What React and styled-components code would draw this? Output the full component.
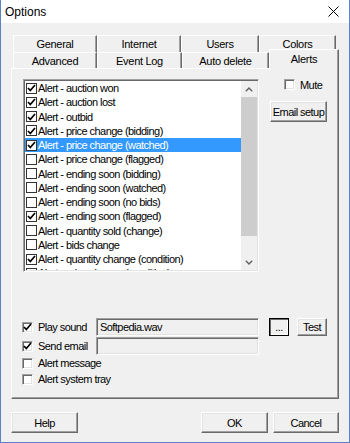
import React from 'react'
import styled, { createGlobalStyle } from 'styled-components'

const Global = createGlobalStyle`
  body {
    margin: 0;
    background: #fff;
  }
`

const Win = styled.div`
  width: 350px;
  height: 443px;
  box-sizing: border-box;
  border: 1px solid #5b82c6;
  border-top: none;
  background: #f0f0f0;
  display: flex;
  flex-direction: column;
  font-family: "Liberation Sans", Arial, sans-serif;
  font-size: 11px;
  letter-spacing: -0.55px;
  color: #000;
`

const TitleBar = styled.div`
  height: 23px;
  background: #fff;
  display: flex;
  align-items: center;
  justify-content: space-between;
  padding: 0 10px 0 4px;
  font-size: 12px;
  letter-spacing: 0;
`

const Body = styled.div`
  display: flex;
  flex-direction: column;
  padding: 12px 10px 0 10px;
`

const TabRow = styled.div`
  display: flex;
  align-items: flex-start;
  margin-left: 2px;
  height: ${p => p.$h}px;
`

const Tab = styled.div`
  width: ${p => p.$w}px;
  height: ${p => (p.$active ? 20 : p.$h)}px;
  margin-top: ${p => (p.$active ? -3 : 0)}px;
  box-sizing: border-box;
  background: #f0f0f0;
  border-top: 1px solid #fff;
  border-left: 1px solid #fff;
  border-right: 1px solid #696969;
  box-shadow: inset -1px 0 #a0a0a0;
  display: flex;
  align-items: ${p => (p.$active ? 'flex-start' : 'center')};
  padding-top: ${p => (p.$active ? 3 : 0)}px;
  justify-content: center;
  letter-spacing: -0.3px;
  z-index: ${p => (p.$active ? 2 : 0)};
`

const Panel = styled.div`
  height: 331px;
  box-sizing: border-box;
  border: 1px solid;
  border-color: #fff #696969 #696969 #fff;
  box-shadow: inset -1px -1px #a0a0a0;
  padding: 10px 11px 0 11px;
  display: flex;
  flex-direction: column;
`

const Top = styled.div`
  display: flex;
`

const ListBox = styled.div`
  width: 236px;
  height: 193px;
  box-sizing: border-box;
  border: 1px solid;
  border-color: #a0a0a0 #fff #fff #a0a0a0;
  box-shadow: inset 1px 1px #696969, inset -1px -1px #e3e3e3;
  padding: 1px;
  background: #fff;
  display: flex;
`

const Rows = styled.div`
  flex: 1;
  overflow: hidden;
`

const Row = styled.div`
  height: 14.25px;
  display: flex;
  align-items: center;
  white-space: nowrap;
  background: ${p => (p.$sel ? '#3399ff' : 'transparent')};
  color: ${p => (p.$sel ? '#fff' : '#000')};
  padding-left: 1px;
`

const FlatBox = styled.span`
  width: 11px;
  height: 11px;
  box-sizing: border-box;
  border: 1px solid #333;
  background: #fff;
  display: inline-flex;
  align-items: center;
  justify-content: center;
  margin-right: 1px;
  flex: none;
`

const Scroll = styled.div`
  width: 16px;
  display: flex;
  flex-direction: column;
  background: #f0f0f0;
`

const Arrow = styled.div`
  height: 16px;
  display: flex;
  align-items: center;
  justify-content: center;
`

const Track = styled.div`
  flex: 1;
  display: flex;
  flex-direction: column;
`

const Thumb = styled.div`
  height: 139px;
  background: #cdcdcd;
`

const Side = styled.div`
  margin-left: 11px;
  display: flex;
  flex-direction: column;
`

const MuteRow = styled.label`
  display: flex;
  align-items: center;
  height: 11px;
  padding-left: 14px;
  gap: 5px;
`

const Btn = styled.div`
  width: ${p => p.$w}px;
  height: ${p => p.$h || 21}px;
  box-sizing: border-box;
  border: 1px solid;
  border-color: ${p => (p.$dark ? '#000' : '#fff #696969 #696969 #fff')};
  box-shadow: ${p => (p.$dark ? 'inset 1px 1px #696969, inset -1px -1px #fff' : 'inset -1px -1px #a0a0a0, inset 1px 1px #e3e3e3')};
  background: #f0f0f0;
  display: flex;
  align-items: center;
  justify-content: center;
  white-space: nowrap;
  margin-top: ${p => p.$mt || 0}px;
  margin-left: ${p => p.$ml || 0}px;
  flex: none;
`

const Options = styled.div`
  margin-top: 46px;
  margin-left: -1px;
  display: flex;
  flex-direction: column;
`

const OptRow = styled.div`
  display: flex;
  align-items: center;
  height: ${p => p.$h}px;
  margin-bottom: ${p => p.$mb || 0}px;
`

const SunkBox = styled.span`
  width: 11px;
  height: 11px;
  box-sizing: border-box;
  border: 1px solid;
  border-color: #a0a0a0 #fff #fff #a0a0a0;
  box-shadow: inset 1px 1px #696969, inset -1px -1px #e3e3e3;
  background: #fff;
  display: inline-flex;
  align-items: center;
  justify-content: center;
  margin-right: 5px;
  flex: none;
`

const Label = styled.span`
  width: ${p => p.$w || 'auto'};
  flex: none;
`

const Field = styled.div`
  width: 163px;
  height: 18px;
  box-sizing: border-box;
  border: 1px solid;
  border-color: #a0a0a0 #fff #fff #a0a0a0;
  box-shadow: inset 1px 1px #696969, inset -1px -1px #e3e3e3;
  background: #f0f0f0;
  padding-left: 3px;
  display: flex;
  align-items: center;
`

const Footer = styled.div`
  display: flex;
  padding-top: 13px;
  gap: 5px;
`

const Spacer = styled.div`
  flex: 1;
`

const Check = () => (
  <svg width="9" height="8" viewBox="0 0 9 8">
    <polyline points="1,4 3.3,6.5 8,1" fill="none" stroke="#000" strokeWidth="1.7" />
  </svg>
)

const items = [
  ['Alert - auction won', true],
  ['Alert - auction lost', true],
  ['Alert - outbid', true],
  ['Alert - price change (bidding)', true],
  ['Alert - price change (watched)', true, true],
  ['Alert - price change (flagged)', false],
  ['Alert - ending soon (bidding)', false],
  ['Alert - ending soon (watched)', false],
  ['Alert - ending soon (no bids)', false],
  ['Alert - ending soon (flagged)', true],
  ['Alert - quantity sold (change)', false],
  ['Alert - bids change', false],
  ['Alert - quantity change (condition)', true],
  ['Alert - price change (condition)', false],
]

export default function App() {
  return (
    <Win>
      <Global />
      <TitleBar>
        <span>Options</span>
        <svg width="11" height="11" viewBox="0 0 11 11">
          <path d="M0.5 0.5 L10.5 10.5 M10.5 0.5 L0.5 10.5" stroke="#000" strokeWidth="1" />
        </svg>
      </TitleBar>
      <Body>
        <TabRow $h={17}>
          <Tab $w={84} $h={17}>General</Tab>
          <Tab $w={84} $h={17}>Internet</Tab>
          <Tab $w={78} $h={17}>Users</Tab>
          <Tab $w={77} $h={17}>Colors</Tab>
        </TabRow>
        <TabRow $h={16}>
          <Tab $w={84} $h={16}>Advanced</Tab>
          <Tab $w={85} $h={16}>Event Log</Tab>
          <Tab $w={87} $h={16}>Auto delete</Tab>
          <Tab $w={70} $h={16} $active>Alerts</Tab>
        </TabRow>
        <Panel>
          <Top>
            <ListBox>
              <Rows>
                {items.map(([t, c, s]) => (
                  <Row key={t} $sel={s}>
                    <FlatBox>{c && <Check />}</FlatBox>
                    {t}
                  </Row>
                ))}
              </Rows>
              <Scroll>
                <Arrow>
                  <svg width="8" height="5" viewBox="0 0 8 5">
                    <polyline points="0.8,4.2 4,1 7.2,4.2" fill="none" stroke="#606060" strokeWidth="1.4" />
                  </svg>
                </Arrow>
                <Track>
                  <Thumb />
                </Track>
                <Arrow>
                  <svg width="8" height="5" viewBox="0 0 8 5">
                    <polyline points="0.8,0.8 4,4 7.2,0.8" fill="none" stroke="#606060" strokeWidth="1.4" />
                  </svg>
                </Arrow>
              </Scroll>
            </ListBox>
            <Side>
              <MuteRow>
                <SunkBox style={{ marginRight: 0 }} />
                Mute
              </MuteRow>
              <Btn $w={57} $h={21} $mt={11}>Email setup</Btn>
            </Side>
          </Top>
          <Options>
            <OptRow $h={18} $mb={1}>
              <SunkBox><Check /></SunkBox>
              <Label $w="58px">Play sound</Label>
              <Field>Softpedia.wav</Field>
              <Btn $w={20} $h={18} $ml={10} $dark>...</Btn>
              <Btn $w={30} $h={18} $ml={8}>Test</Btn>
            </OptRow>
            <OptRow $h={18}>
              <SunkBox><Check /></SunkBox>
              <Label $w="58px">Send email</Label>
              <Field />
            </OptRow>
            <OptRow $h={16}>
              <SunkBox />
              <Label>Alert message</Label>
            </OptRow>
            <OptRow $h={16}>
              <SunkBox />
              <Label>Alert system tray</Label>
            </OptRow>
          </Options>
        </Panel>
        <Footer>
          <Btn $w={67}>Help</Btn>
          <Spacer />
          <Btn $w={67}>OK</Btn>
          <Btn $w={66}>Cancel</Btn>
        </Footer>
      </Body>
    </Win>
  )
}
